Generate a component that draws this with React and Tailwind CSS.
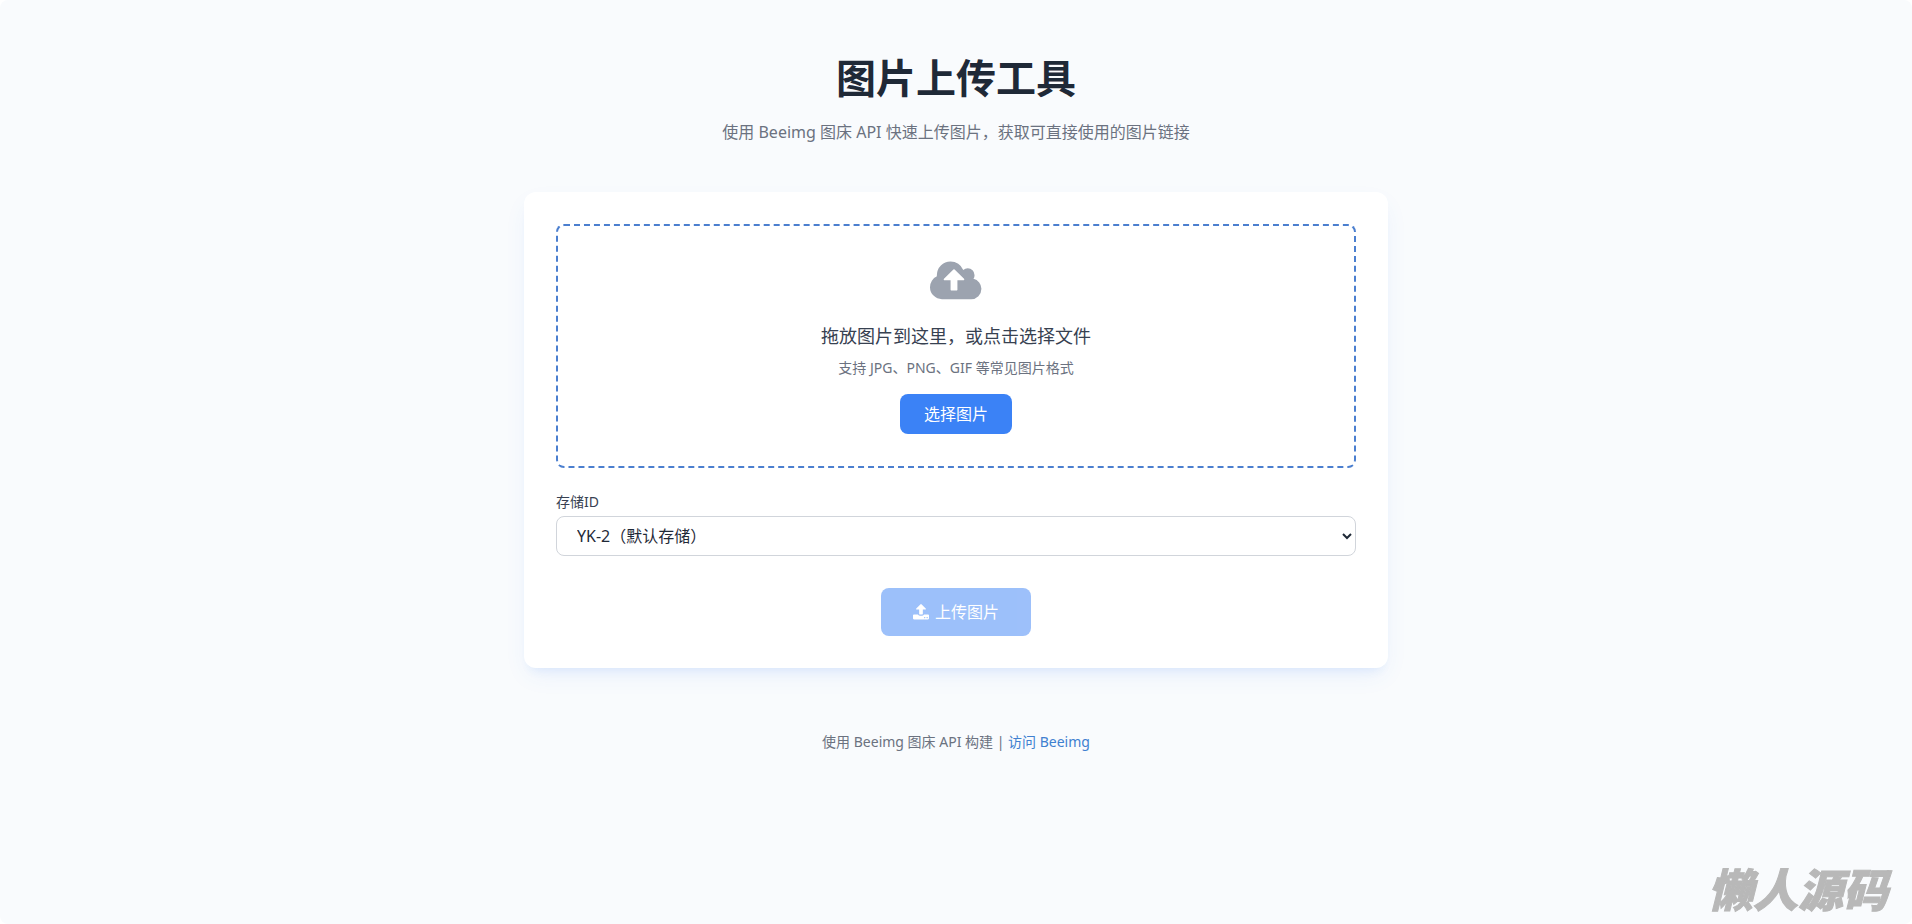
import { useRef, useState } from "react";

const STORAGES = [{ id: "2", label: "YK-2（默认存储）" }];

function CloudUploadIcon({ className }) {
  return (
    <svg viewBox="0 0 1920 1792" fill="currentColor" aria-hidden="true" className={className}>
      <path d="M1280 800q0-14-9-23l-352-352q-9-9-23-9t-23 9l-351 351q-10 12-10 24 0 14 9 23t23 9h224v352q0 13 9.5 22.5t22.5 9.5h192q13 0 22.5-9.5t9.5-22.5v-352h224q13 0 22.5-9.5t9.5-22.5zm640 352q0 159-112.5 271.5t-271.5 112.5h-1088q-185 0-316.5-131.5t-131.5-316.5q0-130 70-240t188-165q-2-30-2-43 0-212 150-362t362-150q156 0 285.5 87t188.5 231q71-62 166-62 106 0 181 75t75 181q0 76-41 138 130 31 213.5 135.5t83.5 238.5z" />
    </svg>
  );
}

function UploadIcon({ className }) {
  return (
    <svg viewBox="64 64 1664 1664" fill="currentColor" aria-hidden="true" className={className}>
      <path d="M1344 1472q0-26-19-45t-45-19-45 19-19 45 19 45 45 19 45-19 19-45zm256 0q0-26-19-45t-45-19-45 19-19 45 19 45 45 19 45-19 19-45zm128-224v320q0 40-28 68t-68 28h-1472q-40 0-68-28t-28-68v-320q0-40 28-68t68-28h427q21 56 70.5 92t110.5 36h256q61 0 110.5-36t70.5-92h427q40 0 68 28t28 68zm-325-648q-17 40-59 40h-256v448q0 26-19 45t-45 19h-256q-26 0-45-19t-19-45v-448h-256q-42 0-59-40-17-39 14-69l448-448q18-19 45-19t45 19l448 448q31 30 14 69z" />
    </svg>
  );
}

export default function App() {
  const [file, setFile] = useState(null);
  const [storageId, setStorageId] = useState("2");
  const inputRef = useRef(null);

  const handleDrop = (e) => {
    e.preventDefault();
    setFile(e.dataTransfer.files[0] || null);
  };

  return (
    <div className="min-h-screen rounded-lg bg-[#f9fbfd] font-['Noto_Sans','Noto_Sans_CJK_SC',sans-serif] text-base text-[#1f2937]">
      <div className="mx-auto max-w-4xl px-4 py-12">
        <header className="mb-12 text-center">
          <h1 className="mb-3 text-[40px] leading-[60px] font-bold">图片上传工具</h1>
          <p className="text-[#6b7280]">
            使用 Beeimg 图床 API 快速上传图片，获取可直接使用的图片链接
          </p>
        </header>

        <main className="rounded-xl bg-white p-8 shadow-[0_10px_25px_-5px_rgba(59,130,246,0.1),0_8px_10px_-6px_rgba(59,130,246,0.1)]">
          <div
            onDragOver={(e) => e.preventDefault()}
            onDrop={handleDrop}
            className="mb-6 flex flex-col items-center rounded-lg border-2 border-dashed border-[#4b7fcf] p-8 text-center"
          >
            <CloudUploadIcon className="mb-4 h-12 text-[#9ca3af]" />
            <p className="mb-2 text-lg leading-7 text-[#374151]">拖放图片到这里，或点击选择文件</p>
            <p className="mb-4 text-sm text-[#6b7280]">支持 JPG、PNG、GIF 等常见图片格式</p>
            <input
              ref={inputRef}
              type="file"
              accept="image/*"
              aria-label="选择图片"
              className="hidden"
              onChange={(e) => setFile(e.target.files[0] || null)}
            />
            <button
              type="button"
              onClick={() => inputRef.current.click()}
              className="rounded-lg bg-[#3b82f6] px-6 py-2 text-white hover:bg-blue-600"
            >
              选择图片
            </button>
          </div>

          <div className="mb-8">
            <label htmlFor="storage" className="mb-1 block text-sm text-[#374151]">
              存储ID
            </label>
            <select
              id="storage"
              value={storageId}
              onChange={(e) => setStorageId(e.target.value)}
              className="h-10 w-full rounded-lg border border-[#d1d5db] bg-white px-4"
            >
              {STORAGES.map((s) => (
                <option key={s.id} value={s.id}>
                  {s.label}
                </option>
              ))}
            </select>
          </div>

          <div className="flex justify-center">
            <button
              type="button"
              disabled={!file}
              className="flex items-center gap-1.5 rounded-lg bg-[#3b82f6] px-8 py-3 text-white disabled:opacity-50"
            >
              <UploadIcon className="h-4" />
              上传图片
            </button>
          </div>
        </main>

        <footer className="mt-16 text-center text-sm text-[#6b7280]">
          使用 Beeimg 图床 API 构建 |{" "}
          <a href="#beeimg" className="text-[#4080d0] hover:underline">
            访问 Beeimg
          </a>
        </footer>
      </div>

      <div className="pointer-events-none fixed right-6 bottom-2.5 font-['Noto_Sans_CJK_SC',sans-serif] text-[45px] leading-[52px] font-black text-[#b8b8b8] italic [-webkit-text-stroke:1px_#b8b8b8]">
        懒人源码
      </div>
    </div>
  );
}
